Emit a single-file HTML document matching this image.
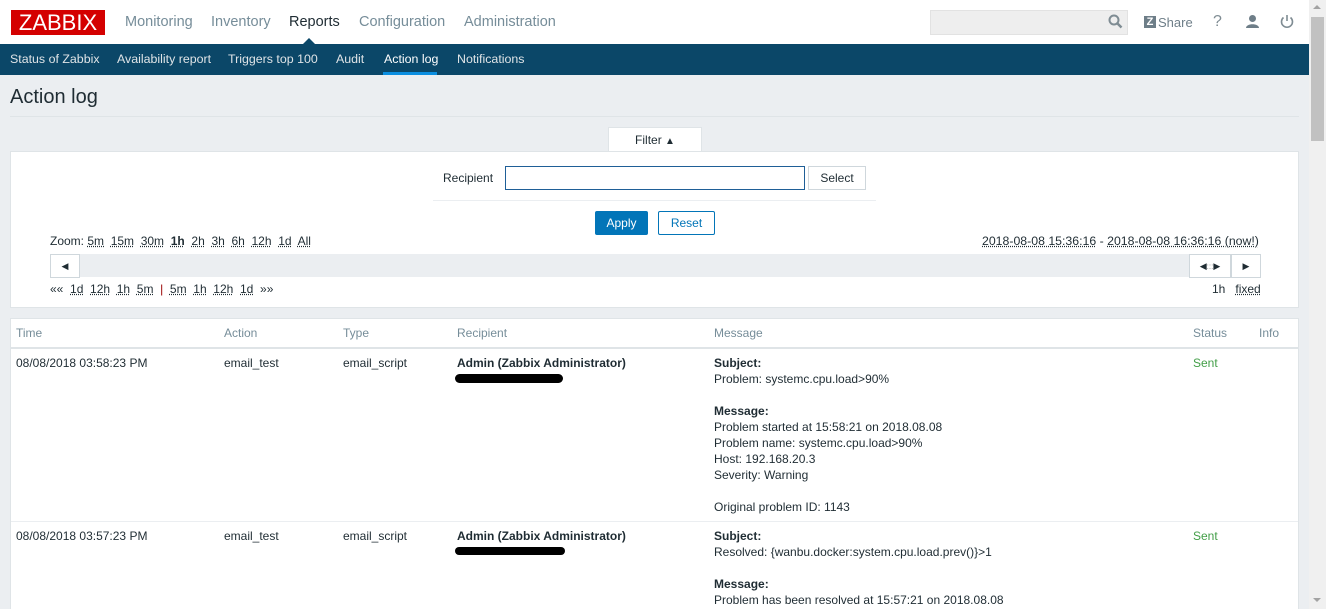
<!DOCTYPE html>
<html style="overflow:hidden"><head><style>
*{box-sizing:border-box;margin:0;padding:0}
body{width:1326px;height:609px;overflow:hidden;background:#ebeef1;font-family:"Liberation Sans",Arial,sans-serif;font-size:12px;color:#1f2c33;position:relative}
.a{position:absolute}
.hdr{left:0;top:0;width:1309px;height:44px;background:#fff}
.logo{left:11px;top:10px;width:94px;height:25px;background:#d40000;color:#fff;font-size:22px;line-height:25px;text-align:center}
.menu span{position:absolute;top:14px;font-size:14.5px;color:#768d99}
.nav{left:0;top:44px;width:1309px;height:31px;background:#0b4768}
.nav span{position:absolute;top:8px;color:#dfe4e7;font-size:12.4px}
.sb{left:1309px;top:0;width:17px;height:609px;background:#f0f0f0}
.dl{text-decoration:underline dotted;color:#1f2c33}
.box{background:#fff;border:1px solid #dfe4e7}
</style></head><body>
<div class="a hdr"></div>
<div class="a logo">ZABBIX</div>
<div class="menu"><span style="left:125px">Monitoring</span><span style="left:211px">Inventory</span><span style="left:289px;color:#1f2c33">Reports</span><span style="left:359px">Configuration</span><span style="left:464px">Administration</span></div>
<div class="a" style="left:930px;top:10px;width:198px;height:25px;background:#eee;border:1px solid #e2e2e2"></div>
<svg class="a" style="left:1108px;top:14px" width="16" height="16"><circle cx="6" cy="6" r="4.5" fill="none" stroke="#7f8c93" stroke-width="2"/><path d="M9.5 9.5l4 4" stroke="#7f8c93" stroke-width="2.5"/></svg>
<div class="a" style="left:1144px;top:16px;width:12px;height:12px;background:#6e7e88;color:#fff;font-size:11px;font-weight:bold;line-height:12px;text-align:center">Z</div>
<span class="a" style="left:1158px;top:15px;font-size:13px;color:#6e7e88">Share</span>
<span class="a" style="left:1213px;top:13px;font-size:16px;color:#7f8c93">?</span>
<svg class="a" style="left:1245px;top:14px" width="16" height="16"><circle cx="7.5" cy="4.5" r="3.5" fill="#6e7e88"/><path d="M1 14c0-5 13-5 13 0z" fill="#6e7e88"/></svg>
<svg class="a" style="left:1279px;top:13px" width="16" height="16"><path d="M4.5 4.5a5.5 5.5 0 1 0 7 0" fill="none" stroke="#7f8c93" stroke-width="1.6"/><path d="M8 2v6" stroke="#7f8c93" stroke-width="1.6"/></svg>
<div class="a nav"><span style="left:10px">Status of Zabbix</span><span style="left:117px">Availability report</span><span style="left:228px">Triggers top 100</span><span style="left:336px">Audit</span><span style="left:384px;color:#fff">Action log</span><span style="left:457px">Notifications</span></div>
<div class="a" style="left:303px;top:38px;width:0;height:0;border:6px solid transparent;border-bottom-color:#0b4768;border-top:0"></div>
<div class="a" style="left:383px;top:72px;width:54px;height:3px;background:#0b8ee0"></div>
<div class="a sb"><div class="a" style="left:2px;top:17px;width:13px;height:124px;background:#c1c1c1"></div><div class="a" style="left:4px;top:5px;border:4px solid transparent;border-bottom:4px solid #a3a3a3;border-top:0"></div><div class="a" style="left:4px;top:598px;border:4px solid transparent;border-top:4px solid #a3a3a3;border-bottom:0"></div></div>
<span class="a" style="left:10px;top:86px;font-size:20px;color:#1f2c33">Action log</span>
<div class="a" style="left:10px;top:116px;width:1289px;height:1px;background:#dfe4e7"></div>
<div class="a" style="left:608px;top:127px;width:94px;height:25px;background:#fff;border:1px solid #dfe4e7;border-bottom:none;text-align:center;line-height:25px">Filter <span style="font-size:10px">▲</span></div>
<div class="a box" style="left:10px;top:151px;width:1289px;height:157px"></div>
<span class="a" style="left:443px;top:171px">Recipient</span>
<div class="a" style="left:505px;top:166px;width:300px;height:24px;border:1px solid #1f5f97;background:#fff"></div>
<div class="a" style="left:808px;top:166px;width:58px;height:24px;border:1px solid #cfd7dc;text-align:center;line-height:22px">Select</div>
<div class="a" style="left:433px;top:200px;width:443px;height:1px;background:#ebeef1"></div>
<div class="a" style="left:595px;top:211px;width:53px;height:24px;background:#0275b8;color:#fff;text-align:center;line-height:24px;border-radius:2px">Apply</div>
<div class="a" style="left:658px;top:211px;width:57px;height:24px;border:1px solid #0275b8;color:#0275b8;text-align:center;line-height:22px;border-radius:2px">Reset</div>
<div class="a" style="left:50px;top:234px;color:#1f2c33">Zoom: <span class="dl">5m</span>&nbsp; <span class="dl">15m</span>&nbsp; <span class="dl">30m</span>&nbsp; <b class="dl">1h</b>&nbsp; <span class="dl">2h</span>&nbsp; <span class="dl">3h</span>&nbsp; <span class="dl">6h</span>&nbsp; <span class="dl">12h</span>&nbsp; <span class="dl">1d</span>&nbsp; <span class="dl">All</span></div>
<div class="a" style="left:982px;top:234px;font-size:12.3px"><span class="dl">2018-08-08 15:36:16</span> - <span class="dl">2018-08-08 16:36:16 (now!)</span></div>
<div class="a" style="left:50px;top:254px;width:1211px;height:23px;background:#ebeef1"></div>
<div class="a" style="left:50px;top:254px;width:30px;height:24px;background:#fff;border:1px solid #cfd7dc;text-align:center;line-height:22px;font-size:9px">◀</div>
<div class="a" style="left:1189px;top:254px;width:42px;height:24px;background:#fff;border:1px solid #cfd7dc;text-align:center;line-height:22px;font-size:9px;white-space:nowrap">◀<span style="color:#999;font-size:8px">:::</span>▶</div>
<div class="a" style="left:1231px;top:254px;width:30px;height:24px;background:#fff;border:1px solid #cfd7dc;text-align:center;line-height:22px;font-size:9px">▶</div>
<div class="a" style="left:50px;top:282px">«« &nbsp;<span class="dl">1d</span>&nbsp; <span class="dl">12h</span>&nbsp; <span class="dl">1h</span>&nbsp; <span class="dl">5m</span>&nbsp; <span style="color:#900">|</span>&nbsp; <span class="dl">5m</span>&nbsp; <span class="dl">1h</span>&nbsp; <span class="dl">12h</span>&nbsp; <span class="dl">1d</span>&nbsp; »»</div>
<div class="a" style="left:1212px;top:282px">1h&nbsp;&nbsp; <span class="dl">fixed</span></div>
<div class="a box" style="left:10px;top:318px;width:1289px;height:300px"></div>
<div class="a" style="left:11px;top:347px;width:1287px;height:2px;background:#dfe4e7"></div>
<div class="a" style="left:11px;top:521px;width:1287px;height:1px;background:#ebeef1"></div>
<div style="color:#768d99"><span class="a" style="left:16px;top:326px">Time</span><span class="a" style="left:224px;top:326px">Action</span><span class="a" style="left:343px;top:326px">Type</span><span class="a" style="left:457px;top:326px">Recipient</span><span class="a" style="left:714px;top:326px">Message</span><span class="a" style="left:1193px;top:326px">Status</span><span class="a" style="left:1259px;top:326px">Info</span></div>
<span class="a" style="left:16px;top:356px">08/08/2018 03:58:23 PM</span>
<span class="a" style="left:224px;top:356px">email_test</span>
<span class="a" style="left:343px;top:356px">email_script</span>
<b class="a" style="left:457px;top:356px">Admin (Zabbix Administrator)</b>
<div class="a" style="left:455px;top:374px;width:108px;height:9px;background:#000;border-radius:5px"></div>
<div class="a" style="left:714px;top:355px;line-height:16px"><b>Subject:</b><br>Problem: systemc.cpu.load&gt;90%<br><br><b>Message:</b><br>Problem started at 15:58:21 on 2018.08.08<br>Problem name: systemc.cpu.load&gt;90%<br>Host: 192.168.20.3<br>Severity: Warning<br><br>Original problem ID: 1143</div>
<span class="a" style="left:1193px;top:356px;color:#429e47">Sent</span>
<span class="a" style="left:16px;top:529px">08/08/2018 03:57:23 PM</span>
<span class="a" style="left:224px;top:529px">email_test</span>
<span class="a" style="left:343px;top:529px">email_script</span>
<b class="a" style="left:457px;top:529px">Admin (Zabbix Administrator)</b>
<div class="a" style="left:455px;top:547px;width:110px;height:8px;background:#000;border-radius:4px"></div>
<div class="a" style="left:714px;top:528px;line-height:16px"><b>Subject:</b><br>Resolved: {wanbu.docker:system.cpu.load.prev()}&gt;1<br><br><b>Message:</b><br>Problem has been resolved at 15:57:21 on 2018.08.08</div>
<span class="a" style="left:1193px;top:529px;color:#429e47">Sent</span>
</body></html>
